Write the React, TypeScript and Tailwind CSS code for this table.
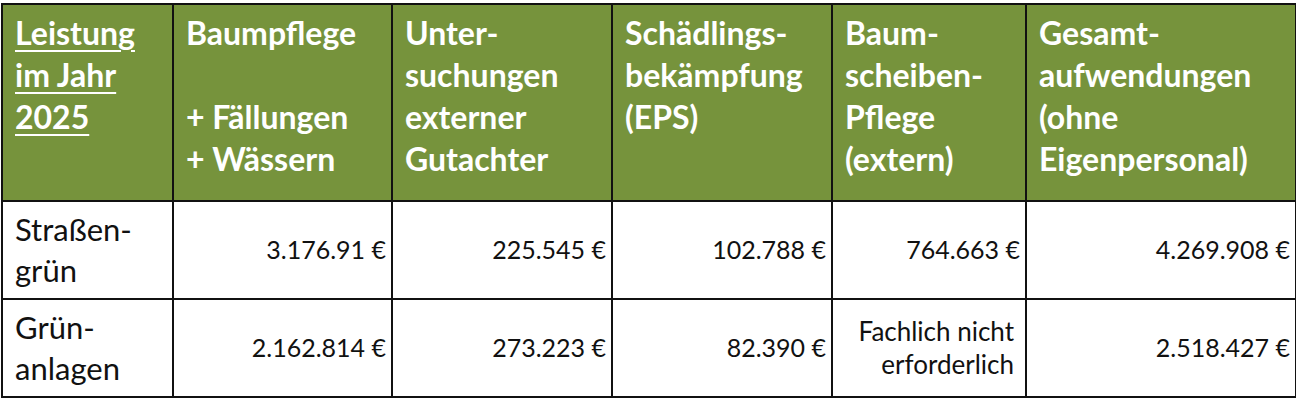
import type { FC } from "react";

const head = "border-2 border-[#111] bg-[#76933c] text-white font-bold align-top text-left px-[12px] pt-[7px] text-[32px] leading-[42px]";
const cell = "border-2 border-[#111] text-right align-middle px-[5px] text-[25px] text-[#111]";

const rows = [
	{ name: ["Straßen-", "grün"], values: ["3.176.91 €", "225.545 €", "102.788 €", "764.663 €", "4.269.908 €"] },
	{ name: ["Grün-", "anlagen"], values: ["2.162.814 €", "273.223 €", "82.390 €", null, "2.518.427 €"] },
];

const App: FC = () => {
	return (
		<div className="w-[1296px] h-[409px] bg-white pt-[3px] pl-[1px]" style={{ fontFamily: "Lato, 'Open Sans', sans-serif" }}>
			<table className="border-collapse table-fixed w-[1294px]">
				<colgroup>
					<col className="w-[171px]" />
					<col className="w-[219px]" />
					<col className="w-[220px]" />
					<col className="w-[220px]" />
					<col className="w-[194px]" />
					<col className="w-[270px]" />
				</colgroup>
				<thead>
					<tr className="h-[197px]">
						<th className={head}>
							<span className="underline underline-offset-[5px] decoration-2">
								Leistung
								<br />
								im Jahr
								<br />
								2025
							</span>
						</th>
						<th className={head}>
							Baumpflege
							<br />
							<br />+ Fällungen
							<br />+ Wässern
						</th>
						<th className={head}>
							Unter-
							<br />
							suchungen
							<br />
							externer
							<br />
							Gutachter
						</th>
						<th className={head}>
							Schädlings-
							<br />
							bekämpfung
							<br />
							(EPS)
						</th>
						<th className={head}>
							Baum-
							<br />
							scheiben-
							<br />
							Pflege
							<br />
							(extern)
						</th>
						<th className={head}>
							Gesamt-
							<br />
							aufwendungen
							<br />
							(ohne
							<br />
							Eigenpersonal)
						</th>
					</tr>
				</thead>
				<tbody>
					{rows.map((row) => (
						<tr key={row.name[0]} className="h-[98px]">
							<td className="border-2 border-[#111] text-left align-middle px-[12px] text-[31px] leading-[41px] text-[#111]">
								{row.name[0]}
								<br />
								{row.name[1]}
							</td>
							{row.values.map((v, i) =>
								v ? (
									<td key={i} className={cell}>
										{v}
									</td>
								) : (
									<td key={i} className="border-2 border-[#111] text-right align-middle pr-[11px] text-[26px] leading-[33px] text-[#111]">
										Fachlich nicht
										<br />
										erforderlich
									</td>
								),
							)}
						</tr>
					))}
				</tbody>
			</table>
		</div>
	);
};

export default App;
